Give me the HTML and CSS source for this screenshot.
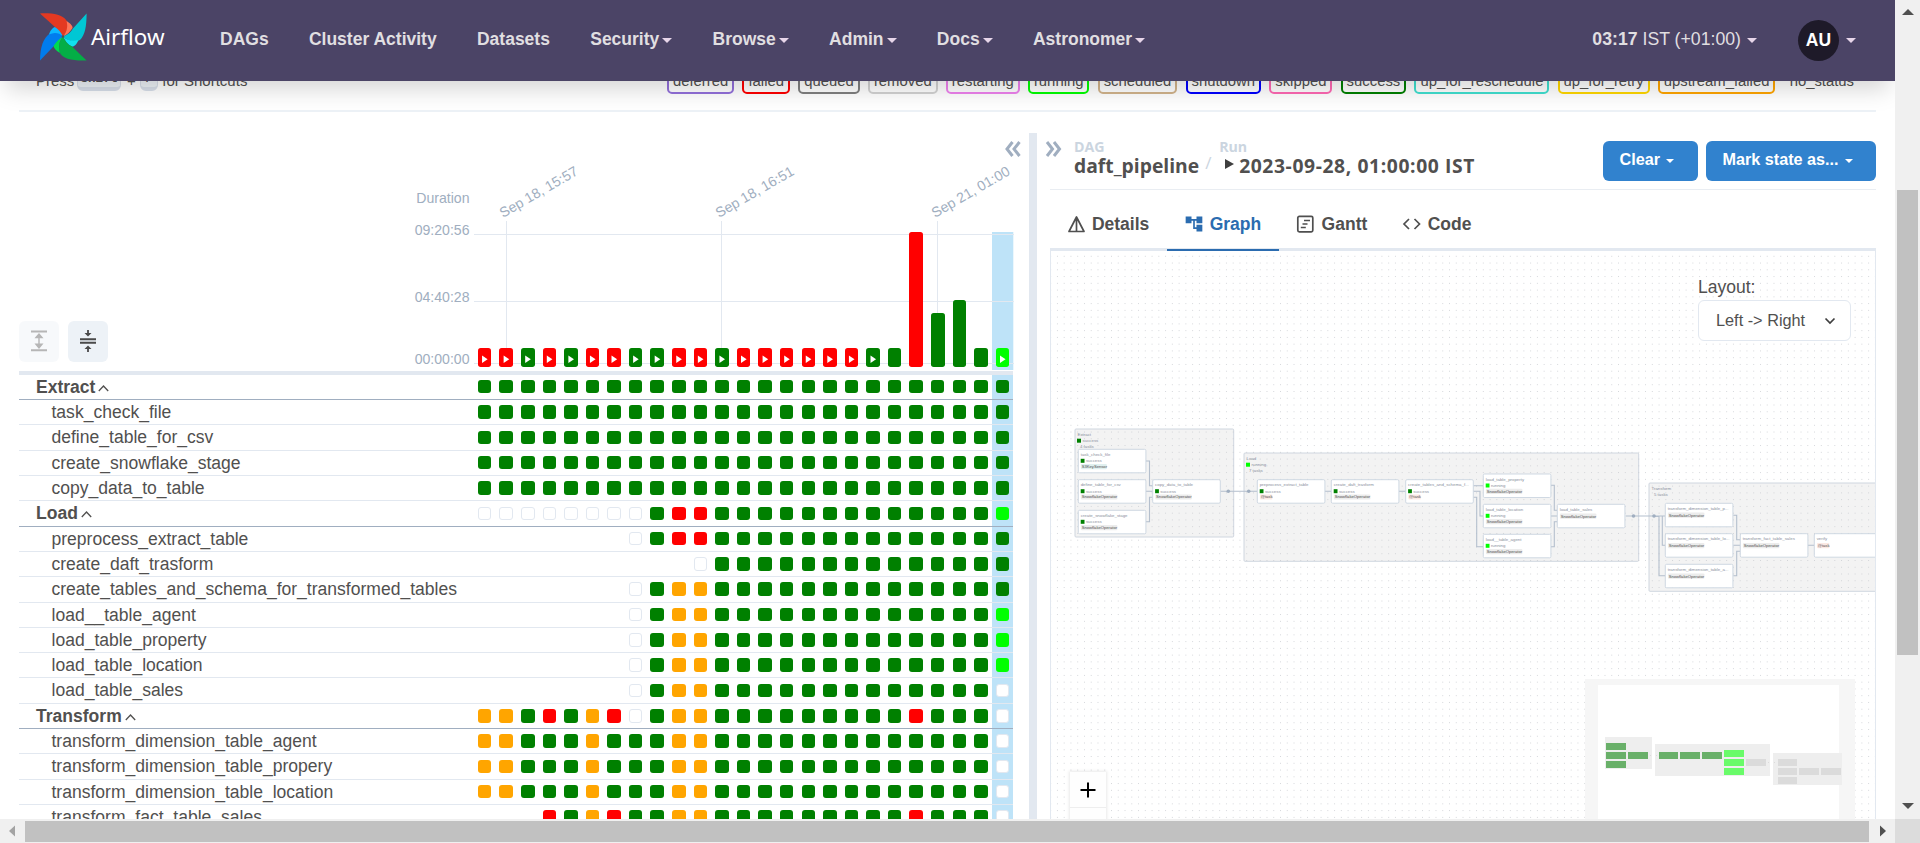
FILE: index.html
```html
<!DOCTYPE html>
<html lang="en">
<head>
<meta charset="utf-8">
<title>daft_pipeline - Grid - Airflow</title>
<link rel="stylesheet" href="styles.css">
</head>
<body>
<div class="window">
  <div class="page">
    <nav class="navbar">
      <div class="brand">
        <svg class="pinwheel" width="48" height="48" viewBox="0 0 48 48">
          <path d="M24 23.5 L1 47.600 C1 35 4 24 12 20 C17 18 21 19.500 24 23.500Z" fill="#017cee"/>
          <path d="M24 23.500 C20 19.500 15 19 10 21.500 C11 18 14 14 16 14 C20 15 23 19 24 23.500Z" fill="#0cb6ff"/>
          <path d="M16 14 L1 .4 C13 0 23 1 27.500 7.500 C30 13 28 19 24 23.500 C22 19 19 16 16 14Z" fill="#e43921"/>
          <path d="M24 23.500 C28 19 29 13 27.500 8 C31 10 34 13 33.500 15 C31 19 28 22 24 23.500Z" fill="#ff7557"/>
          <path d="M24 23.500 C29 22 32 19 34 15.500 L47.600 .4 C47.600 13 46 22 41 27 C35 30 29 28 24 23.500Z" fill="#00c7d4"/>
          <path d="M24 23.500 C29 28 34 28.500 39.500 27 C38 31 35 34 33 33.500 C29 32 26 28 24 23.500Z" fill="#11e1ee"/>
          <path d="M24 23.500 C26 28 29 32 33 33.500 L47.600 47.600 C36 47.600 26 47 21.500 41 C19 35 20 28 24 23.500Z" fill="#04ae46"/>
          <path d="M24 23.500 C20 28 19 34 21 40 C17 38 15 35 14.500 33 C17 29 20 26 24 23.500Z" fill="#00da50"/>
          <circle cx="24" cy="23.500" r="1.300" fill="#51504f"/>
        </svg>
        <span class="brand-name">Airflow</span>
      </div>
      <ul class="menu">
        <li>DAGs</li>
        <li>Cluster Activity</li>
        <li>Datasets</li>
        <li>Security<i class="caret"></i></li>
        <li>Browse<i class="caret"></i></li>
        <li>Admin<i class="caret"></i></li>
        <li>Docs<i class="caret"></i></li>
        <li>Astronomer<i class="caret"></i></li>
      </ul>
      <div class="clock"><span><b>03:17</b> IST (+01:00)</span><i class="caret"></i></div>
      <div class="user"><span class="avatar">AU</span><i class="caret"></i></div>
    </nav>

    <div class="legend-row">
      <div class="shortcut"><span>Press</span><kbd>shift</kbd><span class="plus">+</span><kbd class="slash-key">/</kbd><span>for Shortcuts</span></div>
      <div class="legend">
        <span class="st deferred">deferred</span>
        <span class="st failed">failed</span>
        <span class="st queued">queued</span>
        <span class="st removed">removed</span>
        <span class="st restarting">restarting</span>
        <span class="st running">running</span>
        <span class="st scheduled">scheduled</span>
        <span class="st shutdown">shutdown</span>
        <span class="st skipped">skipped</span>
        <span class="st success">success</span>
        <span class="st reschedule">up_for_reschedule</span>
        <span class="st retry">up_for_retry</span>
        <span class="st upstream">upstream_failed</span>
        <span class="st none">no_status</span>
      </div>
    </div>

    <main class="split">
      <section class="grid-pane">
        <div class="grid-head">
          <div class="grid-tools">
            <button class="tool disabled" aria-label="Expand all groups">
              <svg width="24" height="24" viewBox="0 0 24 24"><path d="M4 2.500h16M4 21.300h16" stroke="#4a4a4a" stroke-width="1.900"/><path d="M12 6v12M9 8.500L12 5l3 3.500zM9 15.300L12 18.800l3-3.500z" stroke="#4a4a4a" stroke-width="1.400" fill="#4a4a4a"/></svg>
            </button>
            <button class="tool" aria-label="Collapse all groups">
              <svg width="24" height="24" viewBox="0 0 24 24"><path d="M4 10.200h16M4 13.800h16" stroke="#4a4a4a" stroke-width="1.900"/><path d="M12 1v4M12 23v-4" stroke="#4a4a4a" stroke-width="1.800"/><path d="M8.500 4h7L12 7.600zM8.500 20h7L12 16.400z" fill="#4a4a4a"/></svg>
            </button>
          </div>
          <svg class="chart" id="chart" width="620" height="237" viewBox="394 133 620 237"></svg>
          <svg class="collapse" width="18" height="16" viewBox="0 0 18 16"><path d="M8.500 1L3 8l5.500 7M15.500 1L10 8l5.500 7" stroke="#a0aec0" stroke-width="3" fill="none"/></svg>
        </div>
        <div class="task-grid" id="grid"></div>
      </section>
      <div class="divider"></div>
      <section class="detail-pane">
        <header class="detail-head">
          <svg class="expand" width="18" height="16" viewBox="0 0 18 16"><path d="M2 1l5.500 7L2 15M9 1l5.500 7L9 15" stroke="#a0aec0" stroke-width="3" fill="none"/></svg>
          <div class="crumb"><small>DAG</small><strong>daft_pipeline</strong></div>
          <span class="slash">/</span>
          <div class="crumb"><small>Run</small><strong class="run"><i class="play"></i>2023-09-28, 01:00:00 IST</strong></div>
          <div class="actions">
            <button class="btn">Clear<i class="caret"></i></button>
            <button class="btn mark">Mark state as...<i class="caret"></i></button>
          </div>
        </header>
        <div class="tabs">
          <div class="tab">
            <svg width="20" height="20" viewBox="0 0 20 20"><path d="M9.500 3L17 17.500H2zM9.500 3v14.500" stroke="#4f4f4f" stroke-width="1.700" fill="none" stroke-linejoin="round"/></svg>Details
          </div>
          <div class="tab active">
            <svg width="20" height="20" viewBox="0 0 24 24"><path d="M22 11V3h-7v3H9V3H2v8h7V8h2v10h4v3h7v-8h-7v3h-2V8h2v3z" fill="#2b6cb0"/></svg>Graph
          </div>
          <div class="tab">
            <svg width="20" height="20" viewBox="0 0 20 20"><rect x="1.800" y="2.300" width="15" height="15.500" rx="1.500" stroke="#4f4f4f" stroke-width="1.700" fill="none"/><path d="M8 6.500h6M6.500 10h5M4.800 13.500h5" stroke="#4f4f4f" stroke-width="1.700"/></svg>Gantt
          </div>
          <div class="tab">
            <svg width="20" height="20" viewBox="0 0 20 20"><path d="M7 5L2 10l5 5M12.500 5l5 5-5 5" stroke="#4f4f4f" stroke-width="1.700" fill="none"/></svg>Code
          </div>
        </div>
        <div class="canvas">
          <svg class="flow" id="flow" width="824" height="568" viewBox="1051 251 824 568"></svg>
          <div class="layout-box">
            <label>Layout:</label>
            <div class="select">Left -&gt; Right<svg width="14" height="14" viewBox="0 0 14 14"><path d="M2.500 4.500L7 9l4.500-4.500" stroke="#3f3f3f" stroke-width="1.700" fill="none"/></svg></div>
          </div>
          <div class="zoom">
            <div class="zoom-btn"><svg width="16" height="16" viewBox="0 0 16 16"><path d="M8 .5v15M.5 8h15" stroke="#000" stroke-width="2"/></svg></div>
            <div class="zoom-btn"></div>
          </div>
          <svg class="minimap" id="minimap" width="270" height="140" viewBox="135 117 810 420"></svg>
        </div>
      </section>
    </main>
  </div>
  <div class="vbar"><svg width="25" height="20" viewBox="0 0 25 20"><path d="M7 15h12l-6-6z" fill="#505050"/></svg><div class="vthumb"></div><svg class="down" width="25" height="20" viewBox="0 0 25 20"><path d="M7 4h12l-6 6z" fill="#505050"/></svg></div>
  <div class="hbar"><svg width="25" height="24" viewBox="0 0 25 24"><path d="M15 6.500v11L9 12z" fill="#a3a3a3"/></svg><div class="hthumb"></div><svg width="26" height="24" viewBox="0 0 26 24"><path d="M11 6.500v11l6-5.500z" fill="#505050"/></svg></div>
  <div class="corner"></div>
</div>
<script src="app.js"></script>
</body>
</html>
```
FILE: styles.css
```css
* { box-sizing: border-box; }
body { margin: 0; font-family: "Liberation Sans", Arial, sans-serif; font-size: 17.5px; color: #51504f; background: #fff; overflow: hidden; }
button { font: inherit; border: 0; padding: 0; }

.window { display: grid; grid-template-columns: 1895px 25px; grid-template-rows: 819px 24px; width: 1920px; height: 843px; overflow: hidden; }
.page { overflow: hidden; height: 819px; }

.navbar { position: relative; z-index: 5; display: flex; align-items: center; height: 81px; padding-left: 39px; background: #4b4466; color: #e0dfe1; box-shadow: 0 14px 22px -6px rgba(0,0,0,.17); }
.brand { display: flex; width: 181px; height: 48px; margin-top: -7px; }
.brand-name { margin: 7px 0 0 4px; font-family: "Noto Sans", sans-serif; font-size: 22.400px; line-height: 34px; color: #fff; }
.menu { display: flex; gap: 40.300px; margin: -2px 0 0; padding: 0; list-style: none; font-weight: bold; }
.menu li, .clock, .user { display: flex; align-items: center; white-space: nowrap; }
.caret { display: inline-block; border: 5px solid transparent; border-top-color: #e8d6ea; border-bottom: 0; margin: 2px 0 0 3px; }
.clock { margin: -2px 0 0 auto; font-size: 17.700px; }
.clock .caret { margin-left: 6px; }
.user { margin: 0 39px 0 41px; }
.avatar { width: 41px; height: 41px; border-radius: 50%; background: #1e1a29; color: #fff; font-weight: bold; line-height: 40px; text-align: center; }
.user .caret { margin: 0 0 0 7px; }

.legend-row { display: flex; justify-content: space-between; align-items: flex-end; height: 31px; margin: 0 19px; padding: 0 0 16px; border-bottom: 2px solid #edf2f7; font-size: 15px; }
.shortcut { display: flex; align-items: flex-end; margin: 0 0 4px 17px; line-height: 18px; white-space: nowrap; }
kbd { position: relative; top: 1px; height: 22px; width: 44px; margin: 0 4px 0 3px; border: 1px solid #d8dfea; border-bottom-width: 4px; border-radius: 6px; background: #edf2f7; font: bold 12.500px/18px "Liberation Mono", monospace; text-align: center; }
.slash-key { width: 18px; }
.plus { margin: 0 1px; width: 10px; text-align: center; }
.legend { display: flex; gap: 8.2px; margin-right: 16px; font-size: 14.850px; }
.st { height: 26px; padding: 0 4px; border: 2px solid; border-radius: 5px; line-height: 23.500px; }
.st.deferred { border-color: mediumpurple; }
.st.failed { border-color: red; }
.st.queued { border-color: gray; }
.st.removed { border-color: lightgrey; }
.st.restarting { border-color: violet; }
.st.running { border-color: lime; }
.st.scheduled { border-color: tan; }
.st.shutdown { border-color: blue; }
.st.skipped { border-color: hotpink; }
.st.success { border-color: green; }
.st.reschedule { border-color: turquoise; }
.st.retry { border-color: gold; }
.st.upstream { border-color: orange; }
.st.none { border-color: transparent; }

.split { display: flex; margin: 21px 19px 0; height: 686px; overflow: hidden; }
.grid-pane { width: 1010px; flex: none; }
.grid-head { display: flex; height: 241.700px; width: 994.300px; border-bottom: 4.700px solid #e2e8f0; position: relative; }
.grid-tools { display: flex; flex: none; align-items: flex-end; gap: 9px; width: 375px; padding-bottom: 9px; }
.tool { display: flex; align-items: center; justify-content: center; width: 40px; height: 41px; border-radius: 6px; background: #edf2f7; }
.tool.disabled { opacity: .4; }
.chart { flex: none; }
.axis { font-size: 14.100px; fill: #a0aec0; }
.collapse { position: absolute; left: 985px; top: 8px; }

.task { display: grid; grid-template-columns: 454.800px repeat(25, 21.580px); width: 994.300px; height: 25.3125px; border-bottom: 1px solid #e2e8f0; }
.task.group { border-color: #a0aec0; }
.task .name { padding-left: 32.500px; font-size: 17.550px; line-height: 24px; white-space: nowrap; }
.task.group .name { padding-left: 17px; font-weight: bold; }
.name svg { margin-left: 3px; vertical-align: 1px; }
.cell { padding: 5.300px 4.040px 0; }
.cell.selected { background: #bee3f8; }
.box { height: 13.500px; border-radius: 3px; background: #fff; }
.box.G { background: green; }
.box.R { background: red; }
.box.O { background: orange; }
.box.L { background: lime; }
.box.N { border: 1px solid #e2e8f0; }

.divider { flex: none; width: 8px; background: #e2e8f0; }
.detail-pane { flex: 1; min-width: 0; padding-left: 13px; display: flex; flex-direction: column; }
.detail-head { display: flex; height: 57px; border-bottom: 1px solid #e9edf2; font-family: "Open Sans", sans-serif; }
.expand { margin: 8px 11px 0 -5px; flex: none; }
.crumb { display: flex; flex-direction: column; padding-top: 4px; color: #51504f; }
.crumb small { font-size: 14.200px; font-weight: 700; line-height: 19px; color: #cbd5e0; }
.crumb strong { font-size: 19.300px; line-height: 20px; white-space: nowrap; }
.crumb .run { letter-spacing: .6px; }
.slash { margin: 20px 8px 0 6px; width: 6px; font-size: 17px; color: #cbd5e0; line-height: 20px; }
.play { display: inline-block; margin: 0 5px 4px 6px; border: 5.500px solid transparent; border-left: 9px solid #3f3f3f; border-right: 0; vertical-align: baseline; }
.actions { display: flex; gap: 8px; margin: 8px 0 0 auto; font-family: "Liberation Sans", sans-serif; }
.btn { width: 95px; height: 40px; padding: 0 0 4px 16.500px; border-radius: 6px; background: #3182ce; color: #fff; font-size: 16.200px; font-weight: bold; text-align: left; white-space: nowrap; }
.btn.mark { width: 170px; }
.btn .caret { margin: 0 0 2px 6px; border-width: 4.500px; border-bottom: 0; border-top-color: #fff; }

.tabs { display: flex; height: 61px; border-bottom: 3px solid #e2e8f0; font-weight: bold; }
.tab { display: flex; align-items: center; gap: 5.400px; height: 61px; padding: 7px 17.500px 0; color: #51504f; }
.tab:first-child { padding-left: 16.500px; }
.tab.active { color: #2b6cb0; border-bottom: 2px solid #2b6cb0; padding-top: 9px; }

.canvas { position: relative; flex: 1; border: 1px solid #e2e8f0; border-width: 0 1px; overflow: hidden; }
.flow { display: block; }
.flow text { font-size: 4.350px; fill: #8a909c; }
.flow .op { font-size: 4.150px; fill: #4f4f4f; }
.layout-box { position: absolute; left: 647px; top: 24px; width: 153px; }
.layout-box label { display: block; line-height: 24px; }
.select { display: flex; align-items: center; justify-content: space-between; height: 41px; margin-top: 1px; padding: 0 13px 0 17px; border: 1px solid #e2e8f0; border-radius: 6px; background: #fff; font-size: 16.300px; }
.zoom { position: absolute; left: 19px; top: 521px; width: 36px; box-shadow: 0 0 3px 1px rgba(0,0,0,.09); }
.zoom-btn { display: flex; align-items: center; justify-content: center; height: 36px; background: #fefefe; border-bottom: 1px solid #eee; }
.minimap { position: absolute; left: 534px; top: 428px; }

.vbar { display: flex; flex-direction: column; background: #f0f0f0; }
.vthumb { width: 21px; height: 465px; margin: 170px 0 0 2px; background: #c1c1c1; }
.down { margin-top: auto; }
.hbar { display: flex; background: #f0f0f0; }
.hthumb { width: 1844px; height: 21px; margin-top: 2px; background: #c1c1c1; }
.corner { background: #dcdcdc; }
```
FILE: app.js
```js
const PITCH = 21.58;
const G13 = "G".repeat(13);
const rows = [
  ["Extract", "G".repeat(25), true],
  ["task_check_file", "G".repeat(25)],
  ["define_table_for_csv", "G".repeat(25)],
  ["create_snowflake_stage", "G".repeat(25)],
  ["copy_data_to_table", "G".repeat(25)],
  ["Load", "NNNNNNNNGRR" + G13 + "L", true],
  ["preprocess_extract_table", ".......NGRR" + G13 + "G"],
  ["create_daft_trasform", "..........N" + G13 + "G"],
  ["create_tables_and_schema_for_transformed_tables", ".......NGOO" + G13 + "G"],
  ["load__table_agent", ".......NGOO" + G13 + "L"],
  ["load_table_property", ".......NGOO" + G13 + "L"],
  ["load_table_location", ".......NGOO" + G13 + "L"],
  ["load_table_sales", ".......NGOO" + G13 + "N"],
  ["Transform", "OOGRGORNGOOGGGGGGGGGRGGGN", true],
  ["transform_dimension_table_agent", "OOGGGOGGGOO" + G13 + "N"],
  ["transform_dimension_table_propery", "OOGGGOGGGOO" + G13 + "N"],
  ["transform_dimension_table_location", "OOGGGOGGGOO" + G13 + "N"],
  ["transform_fact_table_sales", "...RGORGGOOGGGGGGGGGRGGGN"]
];
const chevron = '<svg width="11" height="8" viewBox="0 0 11 8"><path d="M.8 7L5.500 2l4.700 5" stroke="#51504f" stroke-width="1.300" fill="none"/></svg>';
document.getElementById("grid").innerHTML = rows.map(([name, cells, group]) =>
  `<div class="task${group ? " group" : ""}"><div class="name">${name}${group ? chevron : ""}</div>` +
  [...cells].map((c, i) => `<div class="cell${i === 24 ? " selected" : ""}">${c === "." ? "" : `<div class="box ${c}"></div>`}</div>`).join("") +
  "</div>").join("");

// Run duration chart
const colors = { R: "red", G: "green", L: "lime" };
const runs = "RRGRGRRGGRRGRRRRRRGGRGGGL";
const tops = { 20: 232, 21: 313, 22: 300 };
let c = `<rect x="992" y="232" width="21.300" height="138" fill="#bee3f8"/>`;
for (const y of [234, 301, 363]) c += `<rect x="474" y="${y}" width="540" height="1" fill="#e2e8f0"/>`;
for (const x of [506, 721, 937]) c += `<rect x="${x}" y="221" width="1" height="142" fill="#e2e8f0"/>`;
for (const [t, y] of [["Duration", 203], ["09:20:56", 235.3], ["04:40:28", 302.3], ["00:00:00", 364.3]])
  c += `<text class="axis" x="469.500" y="${y}" text-anchor="end">${t}</text>`;
for (const [t, x] of [["Sep 18, 15:57", 503], ["Sep 18, 16:51", 719], ["Sep 21, 01:00", 935]])
  c += `<text class="axis" transform="translate(${x} 218) rotate(-30)">${t}</text>`;
[...runs].forEach((r, i) => {
  const x = 477.85 + i * PITCH, top = tops[i] || 348;
  c += `<rect x="${Math.round(x)}" y="${top}" width="${Math.round(x + 13.5) - Math.round(x)}" height="${367 - top}" rx="2.700" fill="${colors[r]}"/>`;
  if (i < 19 || i === 24) c += `<path d="M${x + 4.2} 355.500v7.500l5.600-3.700z" fill="#fff"/>`;
});
document.getElementById("chart").innerHTML = c;

// Graph canvas
let f = `<defs><pattern id="dots" x="1060.800" y="252.900" width="6.760" height="6.760" patternUnits="userSpaceOnUse"><circle cx="3.380" cy="3.380" r=".5" fill="#c6c9ce"/></pattern></defs>`;
const group = (x, y, w, h, name, n, st) => {
  f += `<rect x="${x}" y="${y}" width="${w}" height="${h}" rx="1" fill="#f3f3f3" stroke="#cfd6df"/>`;
  let s = `<text x="${x + 2.5}" y="${y + 6.8}">${name}</text>`;
  if (st) s += `<rect x="${x + 2}" y="${y + 9.7}" width="4" height="4" fill="${st[1]}"/><text x="${x + 7.6}" y="${y + 13}">${st[0]}</text>`;
  return s + `<text x="${x + 5}" y="${y + (st ? 19 : 13)}">${n} tasks</text>`;
};
let over = group(1075, 429, 158.700, 108, "Extract", 4, ["success", "green"]);
over += group(1244, 453, 394.700, 108.300, "Load", 7, ["running", "lime"]);
over += group(1649, 483, 240, 108.300, "Transform", 5);
f += `<rect x="1051" y="251" width="824" height="568" fill="url(#dots)"/>` + over;
const edges = ["M1145.700 461H1149.500V485.700H1152.700", "M1145.700 491.300H1152.700", "M1145.700 521.700H1149.500V497.300H1152.700",
  "M1220.300 491.300H1257.300", "M1324.700 491.300H1331.300", "M1399 491.300H1405.700",
  "M1473.300 485.700H1483.300", "M1473.300 491.300H1480V516H1483.300", "M1473.300 497.300H1476.700V546.700H1483.300",
  "M1550.700 485.300H1554.300V510.300H1557.300", "M1550.700 516H1557.300", "M1550.700 546.700H1554.300V521.700H1557.300",
  "M1625.700 516H1665.300", "M1654 516H1662.300V545.300H1665.300", "M1654 516.500H1659V575.700H1665.300",
  "M1733.300 515.300H1736.700V539.700H1740.300", "M1733.300 545.300H1740.300", "M1733.300 575.700H1736.700V551.300H1740.300", "M1807.300 545.300H1814.300"];
f += `<path d="${edges.join("")}" fill="none" stroke="#b4bfcd" stroke-width="1.100"/>`;
for (const [x, y] of [[1228.3, 491.3], [1248.7, 491.3], [1633.5, 516], [1654, 516]]) f += `<circle cx="${x}" cy="${y}" r="1.800" fill="#a0aec0"/>`;
const S = "success", R = "running", SO = "SnowflakeOperator";
[
  [1078.3, 449.3, "task_check_file", S, "S3KeySensor"],
  [1078.3, 479.7, "define_table_for_csv", S, SO],
  [1078.3, 510.3, "create_snowflake_stage", S, SO],
  [1152.7, 479.7, "copy_data_to_table", S, SO],
  [1257.3, 479.7, "preprocess_extract_table", S, "@task"],
  [1331.3, 479.7, "create_daft_trasform", S, SO],
  [1405.7, 479.7, "create_tables_and_schema_f...", S, "@task"],
  [1483.3, 474, "load_table_property", R, SO],
  [1483.3, 504.3, "load_table_location", R, SO],
  [1483.3, 534.3, "load__table_agent", R, SO],
  [1557.3, 504.3, "load_table_sales", "", SO],
  [1665.3, 503.3, "transform_dimension_table_p...", "", SO],
  [1665.3, 533.7, "transform_dimension_table_lo...", "", SO],
  [1665.3, 564.3, "transform_dimension_table_a...", "", SO],
  [1740.3, 533.7, "transform_fact_table_sales", "", SO],
  [1814.3, 533.7, "verify", "", "@task"]
].forEach(([x, y, name, st, op]) => {
  f += `<rect x="${x}" y="${y}" width="67.600" height="23.500" rx="1.300" fill="#fff" stroke="#cbd5e0" stroke-width=".9"/><text x="${x + 2.4}" y="${y + 6.6}">${name}</text>`;
  if (st) f += `<rect x="${x + 2.4}" y="${y + 9.5}" width="3.800" height="4" fill="${st === S ? "green" : "lime"}"/><text x="${x + 7.6}" y="${y + 12.8}">${st}</text>`;
  const oy = y + (st ? 14.7 : 9.3), w = op === SO ? 36.5 : op === "@task" ? 12.5 : 26;
  const bg = op === SO ? "#ececec" : op === "@task" ? "#fbe9e4" : "#e0f0f0";
  f += `<rect x="${x + 2.6}" y="${oy}" width="${w}" height="5.200" rx="1" fill="${bg}"/><text class="op" x="${x + 3.4}" y="${oy + 4}">${op}</text>`;
});
document.getElementById("flow").innerHTML = f;

// Minimap, in thirds of a pixel
const r = (x, y, w, h, fill) => `<rect x="${x}" y="${y}" width="${w}" height="${h}" fill="${fill}"/>`;
let m = r(135, 117, 810, 420, "#f6f6f6") + r(174, 135, 723, 402, "#fff");
m += r(195, 291, 141, 96, "#eee") + r(345, 312, 345, 96, "#eee") + r(699, 339, 207, 96, "#eee");
for (const [x, y] of [[198, 309], [198, 336], [198, 363], [264, 336], [357, 336], [420, 336], [486, 336]]) m += r(x, y, x === 357 ? 57 : 60, 21, "#69b069");
for (const y of [330, 357, 384]) m += r(552, y, 60, 21, "#69fb69");
for (const [x, y] of [[618, 357], [714, 357], [714, 384], [714, 411], [777, 384], [843, 384]]) m += r(x, y, x === 714 ? 57 : 60, 21, "#dbdbdb");
for (const [x, y] of [[330, 345], [348, 345], [684, 366], [702, 366]]) m += r(x, y, 3, 3, "#dbdbdb");
document.getElementById("minimap").innerHTML = m;
```
